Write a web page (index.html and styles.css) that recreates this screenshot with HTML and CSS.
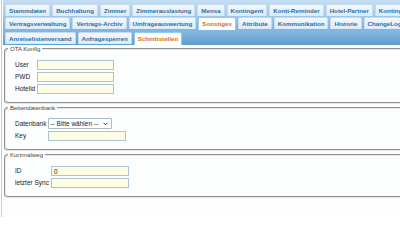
FILE: index.html
```html
<!DOCTYPE html>
<html lang="de">
<head>
<meta charset="utf-8">
<title>Schnittstellen</title>
<link rel="stylesheet" href="styles.css">
</head>
<body>
<div class="widget">
  <div class="nav nav-outer">
    <div class="row">
      <span class="tab">Stammdaten</span>
      <span class="tab">Buchhaltung</span>
      <span class="tab">Zimmer</span>
      <span class="tab">Zimmerauslastung</span>
      <span class="tab">Mensa</span>
      <span class="tab">Kontingent</span>
      <span class="tab">Konti-Reminder</span>
      <span class="tab">Hotel-Partner</span>
      <span class="tab">Kontingentsperren</span>
    </div>
    <div class="row">
      <span class="tab">Vertragsverwaltung</span>
      <span class="tab">Vertrags-Archiv</span>
      <span class="tab">Umfrageauswertung</span>
      <span class="tab active">Sonstiges</span>
      <span class="tab">Attribute</span>
      <span class="tab">Kommunikation</span>
      <span class="tab">Historie</span>
      <span class="tab">ChangeLog</span>
    </div>
  </div>
  <div class="nav nav-inner">
    <div class="row">
      <span class="tab">Anreiselistenversand</span>
      <span class="tab">Anfragesperren</span>
      <span class="tab active">Schnittstellen</span>
    </div>
  </div>
  <div class="panel">
    <fieldset class="box">
      <legend>OTA Konfig</legend>
      <table class="form">
        <tr><td class="lbl">User</td><td><input class="field f77" type="text"></td></tr>
        <tr><td class="lbl">PWD</td><td><input class="field f77" type="text"></td></tr>
        <tr><td class="lbl">Hotelid</td><td><input class="field f77" type="text"></td></tr>
      </table>
    </fieldset>
    <fieldset class="box box-b">
      <legend>Bettendatenbank</legend>
      <table class="form">
        <tr><td class="lbl">Datenbank</td><td><span class="sel"><select class="select"><option>-- Bitte wählen --</option></select><svg class="chev" width="5" height="4" viewBox="0 0 5 4"><path d="M0.6 0.8 L2.5 2.8 L4.4 0.8" fill="none" stroke="#333" stroke-width="1"/></svg></span></td></tr>
        <tr><td class="lbl">Key</td><td><input class="field f78" type="text"></td></tr>
      </table>
    </fieldset>
    <fieldset class="box">
      <legend>Kurzmalweg</legend>
      <table class="form">
        <tr><td class="lbl">ID</td><td><input class="field f78" type="text" value="0"></td></tr>
        <tr><td class="lbl">letzter Sync</td><td><input class="field f78" type="text"></td></tr>
      </table>
    </fieldset>
  </div>
</div>
</body>
</html>
```
FILE: styles.css
```css
html, body {
  margin: 0;
  padding: 0;
  overflow: hidden;
}
body {
  width: 400px;
  height: 217px;
  background: #ffffff;
  font-family: "Liberation Sans", Arial, sans-serif;
}
.widget {
  width: 640px;
  height: 217px;
  margin-left: 1px;
  border-left: 1px solid #b9d1e6;
  padding-left: 1px;
  background: #fcfdfd;
}
.nav {
  display: flex;
  flex-direction: column;
}
.nav-outer {
  padding-top: 4px;
  background: linear-gradient(#c6def2, #80b4dd);
}
.nav-inner {
  padding-top: 2px;
  background: linear-gradient(#86b9e1, #5e9dcd);
}
.row {
  display: flex;
  align-items: flex-start;
  gap: 2px;
  padding-left: 2px;
  white-space: nowrap;
}
.row + .row {
  margin-top: 1px;
}
.tab {
  flex: none;
  font: bold 6.2px/8px "Liberation Sans", Arial, sans-serif;
  color: #2e6e9e;
  padding: 2px 3px 1px;
  border: 1px solid #c5dbec;
  border-bottom: 0;
  border-radius: 2px 2px 0 0;
  background: linear-gradient(#f2f8fe, #dbebfa);
}
.tab.active {
  color: #e17009;
  background: #fcfdfd;
  border-color: #9cc8ec;
  padding-bottom: 2px;
}
.panel {
  display: flex;
  flex-direction: column;
}
.box {
  margin: 0 0 0 1px;
  padding: 6px 0 7px 2px;
  border: 2px groove #e6e6e6;
  border-radius: 4px;
  min-width: 0;
}
.box-b {
  padding-top: 5px;
}
.box legend {
  padding: 0 2px;
  font: 6px/8px "Liberation Sans", Arial, sans-serif;
  color: #444;
}
.form {
  margin-left: 6px;
  border-collapse: separate;
  border-spacing: 0;
}
.form td {
  padding: 1px;
  vertical-align: middle;
}
.lbl {
  font: 6.5px/10px "Liberation Sans", Arial, sans-serif;
  color: #222;
  white-space: nowrap;
}
.field {
  display: block;
  box-sizing: border-box;
  height: 10px;
  margin: 0;
  padding: 0 2px;
  border: 1px solid #aec2d6;
  background: #fdfde4;
  font: 6.5px/8px "Liberation Sans", Arial, sans-serif;
  color: #222;
  outline: none;
}
.f77 { width: 77px; }
.f78 { width: 78px; }
.sel {
  position: relative;
  display: block;
  width: 64px;
  height: 11px;
}
.select {
  appearance: none;
  -webkit-appearance: none;
  display: block;
  box-sizing: border-box;
  width: 64px;
  height: 11px;
  margin: 0;
  padding: 0 1px;
  border: 1px solid #a9bccf;
  border-radius: 1px;
  background: #ffffff;
  font: 6.5px/9px "Liberation Sans", Arial, sans-serif;
  color: #222;
}
.chev {
  position: absolute;
  right: 4px;
  top: 4px;
}
```
